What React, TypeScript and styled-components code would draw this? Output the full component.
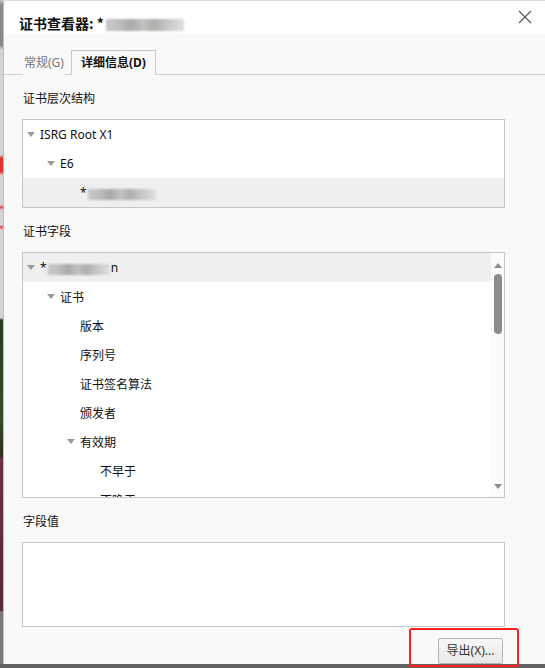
import React from 'react'
import styled, { createGlobalStyle } from 'styled-components'

const GlobalStyle = createGlobalStyle`
    html, body {
        margin: 0;
        padding: 0;
        background: #5f5f5f;
    }
    body {
        font-family: "Noto Sans", "Noto Sans CJK SC", sans-serif;
        font-size: 12px;
        color: #1a1a1a;
    }
`

type Node = {
    label: React.ReactNode
    level: number
    open?: boolean
    selected?: boolean
}

const chain: Node[] = [
    { label: 'ISRG Root X1', level: 0, open: true },
    { label: 'E6', level: 1, open: true },
    { label: <>*<Smudge $w={68} /></>, level: 2, selected: true },
]

const fields: Node[] = [
    { label: <>*<Smudge $w={62} />n</>, level: 0, open: true, selected: true },
    { label: '证书', level: 1, open: true },
    { label: '版本', level: 2 },
    { label: '序列号', level: 2 },
    { label: '证书签名算法', level: 2 },
    { label: '颁发者', level: 2 },
    { label: '有效期', level: 2, open: true },
    { label: '不早于', level: 3 },
    { label: '不晚于', level: 3 },
    { label: '主体', level: 2 },
]

const TreeRows = ({ items }: { items: Node[] }) => (
    <Scroller>
        {items.map((n, i) => (
            <Row key={i} $level={n.level} $selected={n.selected}>
                <Toggle>{n.open && <Arrow />}</Toggle>
                <span>{n.label}</span>
            </Row>
        ))}
    </Scroller>
)

export const App = () => {
    return (
        <Screen>
            <GlobalStyle />
            <Behind />
            <Dialog>
                <Header>
                    <Title>证书查看器: *<Smudge $w={78} $h={12} /></Title>
                    <Close>
                        <svg width="14" height="14" viewBox="0 0 14 14">
                            <path d="M1 1L13 13M13 1L1 13" stroke="#555" strokeWidth="1.1" fill="none" />
                        </svg>
                    </Close>
                </Header>
                <Tabs>
                    <Tab>常规(G)</Tab>
                    <Tab $active>详细信息(D)</Tab>
                </Tabs>
                <Body>
                    <Label>证书层次结构</Label>
                    <Box $h={89}>
                        <TreeRows items={chain} />
                    </Box>
                    <Label>证书字段</Label>
                    <Box $h={246}>
                        <TreeRows items={fields} />
                        <ScrollBar>
                            <ArrowUp />
                            <Thumb />
                            <Spacer />
                            <ArrowDown />
                        </ScrollBar>
                    </Box>
                    <Label>字段值</Label>
                    <Box $h={85} />
                    <Footer>
                        <Marked>
                            <Button>导出(X)...</Button>
                        </Marked>
                    </Footer>
                </Body>
            </Dialog>
            <BottomBand />
        </Screen>
    )
}

function Smudge({ $w, $h = 11 }: { $w: number; $h?: number }) {
    return <SmudgeBox $w={$w} $h={$h} />
}

const Screen = styled.div`
    width: 545px;
    height: 668px;
    display: grid;
    grid-template-columns: 3px 1fr;
    grid-template-rows: 664px 4px;
    overflow: hidden;
    position: relative;
    background: #5f5f5f;
`

const Behind = styled.div`
    background: linear-gradient(
        to bottom,
        #c8c8c8 0px, #8a8a8a 5px, #8a8a8a 45px, #d4d4d4 50px,
        #d4d4d4 155px, #e8302c 158px, #e8302c 172px, #d4d4d4 175px,
        #d4d4d4 205px, #e64040 207px, #d4d4d4 210px, #d4d4d4 225px,
        #e84040 227px, #d4d4d4 230px, #d4d4d4 318px,
        #2d3a24 320px, #3b4a2a 420px, #263020 455px,
        #6d3040 460px, #5a2838 610px, #7a7a7a 612px
    );
`

const Dialog = styled.div`
    background: #f9f9f9;
    display: flex;
    flex-direction: column;
    border-top: 1px solid #d9d9d9;
    border-left: 1px solid #bdbdbd;
`

const BottomBand = styled.div`
    grid-column: 1 / span 2;
    background: #636363;
`

const Header = styled.div`
    height: 33px;
    background: #fff;
    display: flex;
    align-items: flex-start;
    justify-content: space-between;
    padding: 0 13px 0 15px;
`

const Title = styled.div`
    margin-top: 13px;
    font-family: "Noto Sans CJK SC", sans-serif;
    font-weight: 700;
    font-size: 14px;
    line-height: 18px;
    color: #111;
    display: flex;
    align-items: center;
    gap: 1px;
`

const Close = styled.div`
    margin-top: 9px;
    width: 14px;
    height: 14px;
    display: flex;
`

const Tabs = styled.div`
    display: flex;
    align-items: flex-end;
    height: 40px;
    padding-left: 19px;
    border-bottom: 1px solid #cfcfcf;
`

const Tab = styled.div<{ $active?: boolean }>`
    height: 24px;
    line-height: 24px;
    padding: 0 ${p => (p.$active ? '9px' : '0')};
    margin-right: ${p => (p.$active ? '0' : '6px')};
    font-size: 12px;
    font-weight: ${p => (p.$active ? 700 : 400)};
    color: ${p => (p.$active ? '#111' : '#777')};
    border: 1px solid ${p => (p.$active ? '#c8c8c8' : 'transparent')};
    border-bottom: none;
    background: #f9f9f9;
    margin-bottom: -1px;
    box-sizing: content-box;
`

const Body = styled.div`
    flex: 1;
    display: flex;
    flex-direction: column;
    padding: 0 40px 0 18px;
`

const Label = styled.div`
    font-size: 12px;
    line-height: 18px;
    margin: 15px 0 11px 1px;
    color: #111;
`

const Box = styled.div<{ $h: number }>`
    height: ${p => p.$h}px;
    background: #fff;
    border: 1px solid #c6c6c6;
    box-sizing: border-box;
    display: flex;
    overflow: hidden;
`

const Scroller = styled.div`
    flex: 1;
    display: flex;
    flex-direction: column;
    overflow: hidden;
`

const Row = styled.div<{ $level: number; $selected?: boolean }>`
    height: 29px;
    flex: none;
    display: flex;
    align-items: center;
    padding-left: ${p => 4 + p.$level * 20}px;
    background: ${p => (p.$selected ? '#efefef' : 'transparent')};
    font-size: 12px;
    color: #111;
    white-space: nowrap;

    span {
        display: inline-flex;
        align-items: center;
    }
`

const Toggle = styled.div`
    width: 13px;
    flex: none;
    display: flex;
    align-items: center;
`

const Arrow = styled.div`
    width: 0;
    height: 0;
    border-left: 4px solid transparent;
    border-right: 4px solid transparent;
    border-top: 5px solid #9a9a9a;
`

const SmudgeBox = styled.span<{ $w: number; $h: number }>`
    display: inline-block;
    width: ${p => p.$w}px;
    height: ${p => p.$h}px;
    margin: 0 1px;
    transform: translateY(2px);
    background: linear-gradient(
        to right,
        #c9c9c9 0%, #bdbdbd 18%, #a9a9a9 32%, #c2c2c2 48%,
        #b1aeab 62%, #c6c6c6 78%, #e0e0e0 100%
    );
    filter: blur(1.2px);
`

const ScrollBar = styled.div`
    width: 13px;
    flex: none;
    background: #fbfbfb;
    display: flex;
    flex-direction: column;
    align-items: center;
    padding: 10px 0 8px;
`

const ArrowUp = styled.div`
    width: 0;
    height: 0;
    border-left: 4px solid transparent;
    border-right: 4px solid transparent;
    border-bottom: 5px solid #8c8c8c;
`

const ArrowDown = styled.div`
    width: 0;
    height: 0;
    border-left: 4px solid transparent;
    border-right: 4px solid transparent;
    border-top: 5px solid #8c8c8c;
`

const Thumb = styled.div`
    width: 8px;
    height: 60px;
    margin-top: 6px;
    border-radius: 4px;
    background: #8c8c8c;
`

const Spacer = styled.div`
    flex: 1;
`

const Footer = styled.div`
    flex: 1;
    display: flex;
    justify-content: flex-end;
    align-items: flex-end;
`

const Marked = styled.div`
    position: relative;
    padding: 10px 16px 0 29px;
    height: 36px;
    box-sizing: border-box;
    display: flex;
    align-items: flex-end;
    margin-right: -14px;

    &::after {
        content: '';
        position: absolute;
        left: 0;
        top: 0;
        right: 0;
        bottom: -3px;
        border: 2px solid #ff1f1f;
        border-radius: 3px;
        pointer-events: none;
    }
`

const Button = styled.div`
    width: 63px;
    height: 24px;
    border: 1px solid #b4b4b4;
    border-radius: 2px;
    background: linear-gradient(#f6f6f6, #e8e8e8);
    font-size: 12px;
    line-height: 24px;
    text-align: center;
    color: #333;
`

export default App
